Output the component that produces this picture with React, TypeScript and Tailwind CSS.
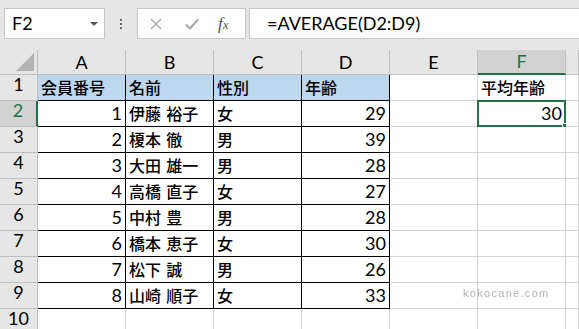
import React from "react";

const LATIN = "font-['Lato','Liberation_Sans',sans-serif]";
const JP = "font-['Noto_Sans_CJK_JP','Noto_Sans',sans-serif]";

type Cell = string | number | null;

const data: Cell[][] = [
  ["会員番号", "名前", "性別", "年齢", null, "平均年齢", null],
  [1, "伊藤 裕子", "女", 29, null, 30, null],
  [2, "榎本 徹", "男", 39, null, null, null],
  [3, "大田 雄一", "男", 28, null, null, null],
  [4, "高橋 直子", "女", 27, null, null, null],
  [5, "中村 豊", "男", 28, null, null, null],
  [6, "橋本 恵子", "女", 30, null, null, null],
  [7, "松下 誠", "男", 26, null, null, null],
  [8, "山崎 順子", "女", 33, null, null, null],
  [null, null, null, null, null, null, null],
];

const cols = ["A", "B", "C", "D", "E", "F", ""];

function Toolbar() {
  return (
    <div className="flex h-[50px] items-start bg-[#e6e6e6] pt-[8px]">
      <div className="ml-[4px] flex h-[31px] w-[101px] items-center justify-between border border-[#c6c6c6] bg-white pl-[7px] pr-[6px]">
        <span className={`${LATIN} text-[18px] text-black`}>F2</span>
        <span className="h-0 w-0 border-x-[4px] border-t-[4px] border-x-transparent border-t-[#555]" />
      </div>
      <div className="flex h-[31px] w-[32px] flex-col items-center justify-center gap-[2px]">
        <span className="h-[2px] w-[2px] bg-[#666]" />
        <span className="h-[2px] w-[2px] bg-[#666]" />
        <span className="h-[2px] w-[2px] bg-[#666]" />
      </div>
      <div className="flex h-[31px] w-[109px] items-center border border-[#c6c6c6] bg-white">
        <svg width="12" height="12" viewBox="0 0 12 12" className="ml-[12px]">
          <path d="M1 1L11 11M11 1L1 11" stroke="#a6a6a6" strokeWidth="1.4" />
        </svg>
        <svg width="14" height="12" viewBox="0 0 14 12" className="ml-[23px]">
          <path d="M1 6.5L5 10.5L13 1.5" stroke="#a6a6a6" strokeWidth="2" fill="none" />
        </svg>
        <span className="ml-[19px] font-['Liberation_Serif',serif] text-[17px] italic leading-none text-[#555]">
          f<span className="text-[13px]">x</span>
        </span>
      </div>
      <div className="ml-[3px] flex h-[31px] flex-1 items-center border border-r-0 border-[#c6c6c6] bg-white pl-[17px]">
        <span className={`${LATIN} text-[18px] text-black`}>=AVERAGE(D2:D9)</span>
      </div>
    </div>
  );
}

export default function App() {
  return (
    <div className="relative h-[329px] w-[579px] overflow-hidden bg-white">
      <Toolbar />
      <div className="grid grid-cols-[38px_repeat(6,88px)_1fr] grid-rows-[25px_repeat(10,26px)]">
        <div className="relative border-r border-b border-[#bfbfbf] bg-[#e6e6e6]">
          <svg width="20" height="20" viewBox="0 0 20 20" className="absolute right-[2px] bottom-[2px]">
            <path d="M19 1L19 19L1 19Z" fill="#b4b4b4" />
          </svg>
        </div>
        {cols.map((c, i) =>
          c === "F" ? (
            <div
              key={i}
              className={`flex items-center justify-center border-r border-b-2 border-r-[#bfbfbf] border-b-[#217346] bg-[#d2d2d2] ${LATIN} text-[18px] text-[#217346]`}
            >
              {c}
            </div>
          ) : (
            <div
              key={i}
              className={`flex items-center justify-center border-r border-b border-[#bfbfbf] bg-[#e6e6e6] ${LATIN} text-[18px] text-black`}
            >
              {c}
            </div>
          )
        )}
        {data.map((row, r) => (
          <React.Fragment key={r}>
            {r === 1 ? (
              <div
                className={`flex items-end justify-center border-r-2 border-b border-r-[#217346] border-b-[#bfbfbf] bg-[#d2d2d2] pb-[2px] ${LATIN} text-[18px] text-[#217346]`}
              >
                {r + 1}
              </div>
            ) : (
              <div
                className={`flex items-end justify-center border-r border-b border-[#bfbfbf] bg-[#e6e6e6] pb-[2px] ${LATIN} text-[18px] text-black`}
              >
                {r + 1}
              </div>
            )}
            {row.map((v, c) => {
              const inTable = c < 4 && r < 9;
              const headerFill = r === 0 && c < 4;
              const border = inTable
                ? "border-r border-b border-black"
                : "border-r border-b border-[#d4d4d4]";
              const bg = headerFill ? "bg-[#bdd7ee]" : "bg-white";
              const isNum = typeof v === "number";
              const selected = r === 1 && c === 5;
              return (
                <div
                  key={c}
                  className={`relative flex items-end overflow-visible ${border} ${bg} ${
                    isNum ? "justify-end pr-[3px] pb-[2px]" : "justify-start pl-[3px] pb-[3px]"
                  }`}
                >
                  {v !== null &&
                    (isNum ? (
                      <span className={`${LATIN} text-[18px] leading-[22px] text-black`}>{v}</span>
                    ) : (
                      <span className={`${JP} text-[16px] font-medium leading-[20px] text-black whitespace-pre`}>
                        {String(v).replace(" ", "\u2004")}
                      </span>
                    ))}
                  {selected && (
                    <>
                      <div className="pointer-events-none absolute -top-[1px] -left-[1px] -right-[1px] -bottom-[1px] border-2 border-[#217346]" />
                      <div className="absolute -right-[3px] -bottom-[3px] h-[6px] w-[6px] border border-white bg-[#217346]" />
                    </>
                  )}
                </div>
              );
            })}
          </React.Fragment>
        ))}
      </div>
      <div className="absolute left-[463px] top-[285px] font-['Liberation_Sans',sans-serif] text-[11px] tracking-[1.3px] text-[#b0b0b0] blur-[0.3px]">
        kokocane.com
      </div>
    </div>
  );
}
